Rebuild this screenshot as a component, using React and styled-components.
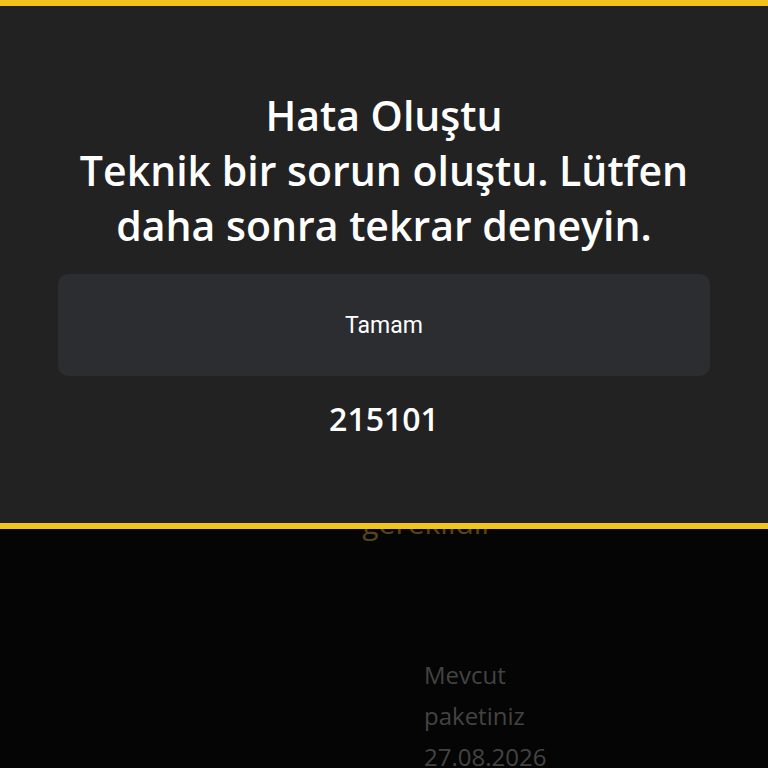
import React from "react";
import styled, { createGlobalStyle } from "styled-components";

const Global = createGlobalStyle`
  html, body { margin: 0; padding: 0; background: #050505; }
  body { width: 768px; height: 768px; overflow: hidden; font-family: "Open Sans", "Noto Sans", sans-serif; }
  * { box-sizing: border-box; }
`;

const Page = styled.div`
  position: relative;
  width: 768px;
  height: 768px;
  background: #050505;
  overflow: hidden;
`;

const Backdrop = styled.div`
  display: flex;
  flex-direction: column;
  padding-top: 503px;
`;

const Requirement = styled.div`
  align-self: center;
  margin-left: 88px;
  font-size: 30px;
  line-height: 40px;
  color: #54461a;
`;

const PackageInfo = styled.div`
  margin-top: 111px;
  margin-left: 424px;
  font-size: 24px;
  line-height: 41px;
  color: #434343;
`;

const Dialog = styled.div`
  position: absolute;
  top: 0;
  left: 0;
  right: 0;
  height: 529px;
  background: #222222;
  border-top: 6px solid #f2c31a;
  border-bottom: 6px solid #f2c31a;
  display: flex;
  flex-direction: column;
  align-items: center;
  padding: 82px 58px 0;
`;

const Message = styled.h1`
  margin: 0;
  text-align: center;
  color: #ffffff;
  font-family: "Open Sans", sans-serif;
  font-weight: 600;
  font-size: 41px;
  line-height: 55px;
  white-space: nowrap;
`;

const OkButton = styled.button`
  margin-top: 21px;
  width: 100%;
  height: 102px;
  border: none;
  border-radius: 10px;
  background: #2c2d30;
  color: #ffffff;
  font-family: Roboto, sans-serif;
  font-size: 23px;
  font-weight: 400;
`;

const Code = styled.div`
  margin-top: 23px;
  color: #ffffff;
  font-family: "Open Sans", sans-serif;
  font-weight: 600;
  font-size: 32px;
  line-height: 40px;
`;

export default function App() {
  return (
    <Page>
      <Global />
      <Backdrop>
        <Requirement>gereklidir</Requirement>
        <PackageInfo>
          Mevcut
          <br />
          paketiniz
          <br />
          27.08.2026
        </PackageInfo>
      </Backdrop>
      <Dialog>
        <Message>
          Hata Oluştu
          <br />
          Teknik bir sorun oluştu. Lütfen
          <br />
          daha sonra tekrar deneyin.
        </Message>
        <OkButton>Tamam</OkButton>
        <Code>215101</Code>
      </Dialog>
    </Page>
  );
}
